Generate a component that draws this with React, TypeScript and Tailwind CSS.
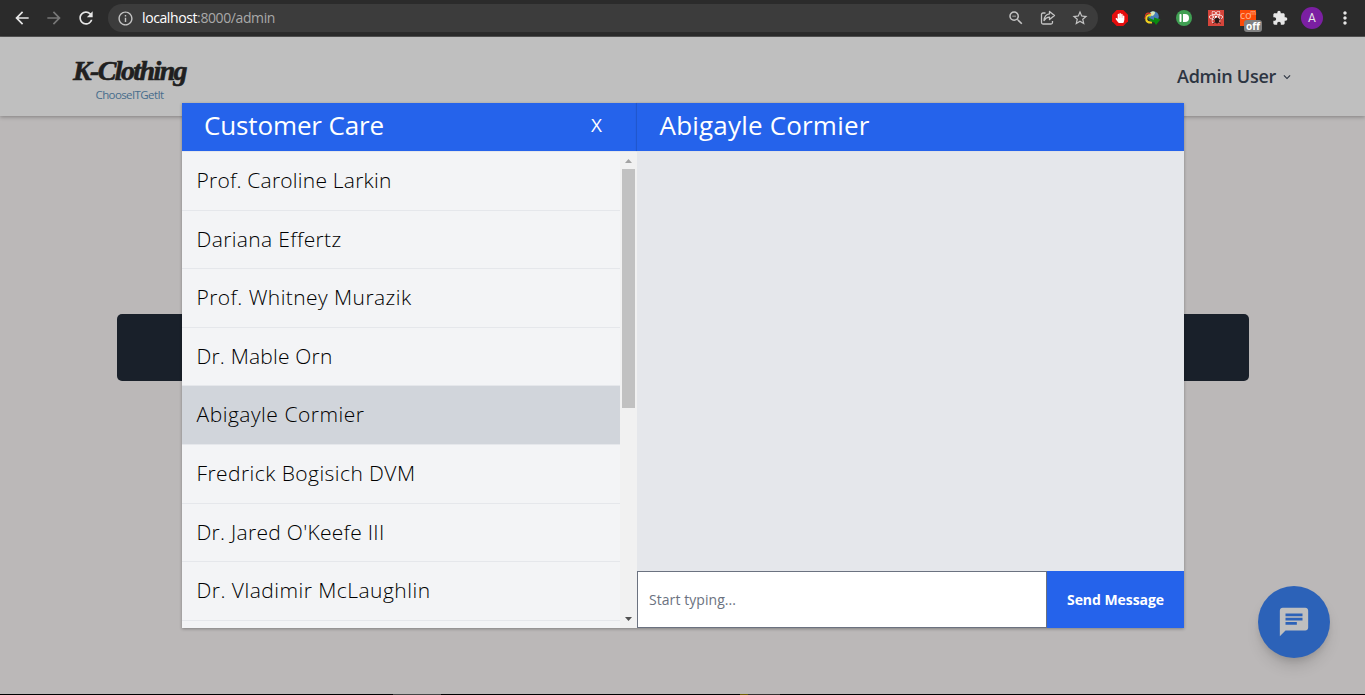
import { useLayoutEffect, useRef } from "react";
import type { ReactNode } from "react";
import { MdArrowBack, MdArrowForward, MdRefresh, MdInfoOutline, MdZoomOut, MdStarBorder, MdExtension, MdMoreVert, MdChat, MdKeyboardArrowDown } from "react-icons/md";
import { FaReact, FaHandPaper } from "react-icons/fa";

type FitProps = { width: number; className?: string; children: ReactNode };

/* Tracks a label so that it spans the given width. */
function Fit({ width, className = "", children }: FitProps) {
  const ref = useRef<HTMLSpanElement>(null);
  useLayoutEffect(() => {
    const el = ref.current;
    if (!el) return;
    el.style.letterSpacing = "0px";
    const count = (el.textContent ?? "").length;
    el.style.letterSpacing = `${(width - el.getBoundingClientRect().width) / count}px`;
  }, [width]);
  return (
    <span ref={ref} className={`inline-block whitespace-nowrap ${className}`}>
      {children}
    </span>
  );
}

const customers = [
  { name: "Prof. Caroline Larkin", width: 195 },
  { name: "Dariana Effertz", width: 145 },
  { name: "Prof. Whitney Murazik", width: 215 },
  { name: "Dr. Mable Orn", width: 136 },
  { name: "Abigayle Cormier", width: 168 },
  { name: "Fredrick Bogisich DVM", width: 219 },
  { name: "Dr. Jared O'Keefe III", width: 188 },
  { name: "Dr. Vladimir McLaughlin", width: 234 },
];

function BrowserBar() {
  return (
    <div className="flex h-[37px] shrink-0 items-center border-b border-[#565656] bg-[#2b2b2b] text-[#e6e6e6]">
      <MdArrowBack className="ml-3 size-5" />
      <MdArrowForward className="ml-3 size-5 text-[#777]" />
      <MdRefresh className="ml-3 size-5" />
      <div className="ml-3 flex h-7 w-[990px] items-center rounded-full bg-[#3c3c3c] pl-[9px] text-[#c4c4c4]">
        <MdInfoOutline className="size-[17px]" />
        <Fit width={133} className="ml-2 font-['Open_Sans',sans-serif] text-[14px] leading-5 text-[#a9a9a9]">
          <span className="text-white">localhost</span>:8000/admin
        </Fit>
        <div className="ml-auto flex items-center gap-[14px] pr-[9px]">
          <MdZoomOut className="size-[18px]" />
          <svg className="size-[18px]" viewBox="0 0 18 18" fill="none" stroke="currentColor" strokeWidth="1.3" strokeLinejoin="round">
            <path d="M6.500 4H4Q2.500 4 2.500 5.500V13.500Q2.500 15 4 15H12Q13.500 15 13.500 13.500V12" />
            <path d="M10.500 2.500L15.500 6.500L10.500 10.500V8.200Q7.500 8 5 11.500Q5.500 5.500 10.500 4.800Z" />
          </svg>
          <MdStarBorder className="size-[18px]" />
        </div>
      </div>
      <div className="ml-3.5 flex items-center gap-4">
        <svg className="size-4" viewBox="0 0 16 16">
          <path d="M4.7 0h6.6L16 4.7v6.6L11.3 16H4.7L0 11.3V4.7z" fill="#e40d0d" />
          <FaHandPaper size={10} x="3" y="3" color="white" />
        </svg>
        <svg className="size-4 overflow-visible" viewBox="0 0 16 16">
          <circle cx="9.500" cy="6.500" r="5.300" fill="#477fb8" />
          <path d="M6 3Q8 0 11 2Q11 5 8 6L6 5z" fill="#d7e7b7" />
          <path d="M7 4Q1 1 1 9" fill="none" stroke="#e33b20" strokeWidth="1.200" />
          <path d="M7 5.500Q2 4 2.300 10Q3 13 8 12.500" fill="none" stroke="#f0d020" strokeWidth="2" />
          <path d="M4 7.500L10 10V7.500L16.500 9.500L12 15L10.500 12.500Q6 12 4 7.500z" fill="#0a8a0f" />
        </svg>
        <svg className="size-4" viewBox="0 0 16 16">
          <circle cx="8" cy="8" r="8" fill="#40a053" />
          <rect x="3.5" y="4" width="2" height="8" rx=".8" fill="white" />
          <path d="M7 4h2a4 4 0 010 8H7z" fill="white" />
        </svg>
        <svg className="size-4" viewBox="0 0 16 16">
          <rect width="16" height="16" fill="#d5453b" />
          <FaReact size={14} x="1" y="0" color="white" />
          <ellipse cx="9" cy="10.500" rx="2.200" ry="3" fill="#291615" />
          <path d="M5 8.500l8 5M13 8.500l-8 5" stroke="#291615" strokeWidth=".8" />
        </svg>
        <div className="relative size-4 bg-[#fc4a08] font-['Lato',sans-serif] text-[11px] leading-[10px] text-[#ffb08a]">
          co<span className="absolute top-[-3px] right-0 text-[7px]">m</span>
          <span className="absolute top-[10px] left-1 flex h-3 w-[18px] items-center justify-center rounded-[3px] bg-[#808080] font-['Open_Sans',sans-serif] text-[10px] leading-3 font-bold text-white">off</span>
        </div>
        <MdExtension className="size-4" />
      </div>
      <div className="ml-[13px] flex size-[22px] items-center justify-center rounded-full bg-[#7b1fa2] font-['Roboto',sans-serif] text-[12px]">A</div>
      <MdMoreVert className="ml-3 size-5" />
    </div>
  );
}

function SiteHeader() {
  return (
    <header className="flex h-[79px] shrink-0 items-center justify-between bg-[#bfbfbf] pr-[71px] pl-[72px] shadow-[0_1px_4px_rgba(0,0,0,0.3)]">
      <div className="flex w-[115px] flex-col items-center pt-1">
        <Fit width={113} className="font-['Liberation_Serif',serif] text-[28px] leading-[30px] font-bold text-[#202020] italic [-webkit-text-stroke:0.6px_#202020]">K-Clothing</Fit>
        <Fit width={68} className="mt-0.5 font-['Open_Sans',sans-serif] text-[11.5px] leading-[14px] text-[#476d8c]">ChooseITGetIt</Fit>
      </div>
      <div className="flex items-center pb-0.5 text-[#2d3542]">
        <Fit width={99} className="font-['Open_Sans',sans-serif] text-[18px] leading-7 font-semibold">Admin User</Fit>
        <MdKeyboardArrowDown className="mt-0.5 ml-1 size-3.5" />
      </div>
    </header>
  );
}

function ChatDialog() {
  return (
    <div className="absolute top-[103px] left-[182px] flex h-[525px] w-[1002px] bg-[#f3f4f6] font-['Open_Sans',sans-serif] shadow-[0_1px_3px_rgba(0,0,0,0.3)]">
      <section className="flex w-[455px] flex-col">
        <div className="flex h-12 shrink-0 items-center bg-[#2563eb] pr-[35px] pb-[5px] pl-[22px] text-white">
          <Fit width={180} className="text-[26px] leading-9">Customer Care</Fit>
          <button className="ml-auto text-[19px] leading-6">X</button>
        </div>
        <div className="flex min-h-0 flex-1 border-t border-[#e5e7eb]">
          <ul className="flex-1 overflow-hidden">
            {customers.map((c) => (
              <li
                key={c.name}
                className={`flex h-[58.6px] items-center border-b border-[#e5e7eb] pl-[14.5px] text-[21px] font-[340] text-black ${c.name === "Abigayle Cormier" ? "bg-[#d1d5db]" : ""}`}
              >
                <Fit width={c.width}>{c.name}</Fit>
              </li>
            ))}
          </ul>
          <div className="flex w-[17px] flex-col items-center bg-[#f1f1f1]">
            <svg className="h-[17px] w-[17px]" viewBox="0 0 17 17"><path d="M5 11h7L8.500 7z" fill="#a3a3a3" /></svg>
            <div className="h-[239px] w-[13px] bg-[#c1c1c1]" />
            <svg className="mt-auto h-[17px] w-[17px]" viewBox="0 0 17 17"><path d="M5 6h7L8.500 10z" fill="#505050" /></svg>
          </div>
        </div>
      </section>
      <section className="flex flex-1 flex-col bg-[#e5e7eb]">
        <div className="flex h-12 items-center bg-[#2563eb] pb-[5px] pl-[22.5px] text-white shadow-[-1px_0_1px_rgba(0,0,0,0.12)]">
          <Fit width={210} className="text-[26px] leading-9">Abigayle Cormier</Fit>
        </div>
        <div className="flex-1" />
        <div className="flex h-[57px]">
          <div className="flex w-[410px] items-center border border-[#6b7280] bg-white pb-px pl-[11px] text-[14px] text-[#6b7280]">
            <Fit width={87}>Start typing...</Fit>
          </div>
          <button className="flex flex-1 items-center justify-center bg-[#2563eb] pb-px text-[14px] font-bold text-white">
            <Fit width={97}>Send Message</Fit>
          </button>
        </div>
      </section>
    </div>
  );
}

export default function App() {
  return (
    <div className="relative flex h-[695px] w-[1365px] flex-col overflow-hidden bg-[#bbb8b8]">
      <BrowserBar />
      <SiteHeader />
      <main className="flex-1 px-[117px] pt-[198px]">
        <div className="h-[67px] w-[1132px] rounded-[5px] bg-[#19202a]" />
      </main>
      <div className="flex h-px bg-black">
        <div className="ml-[393px] h-px w-12 bg-[#454545]" />
        <div className="ml-[299px] h-px w-2 bg-[#6a5b00]" />
        <div className="h-px w-8 bg-[#343030]" />
      </div>
      <ChatDialog />
      <button className="absolute top-[586px] left-[1258px] flex size-[72px] items-center justify-center rounded-full bg-[#2c62b8] text-[#bfbfbf] shadow-[0_10px_15px_-3px_rgba(0,0,0,0.15),0_4px_6px_-2px_rgba(0,0,0,0.1)]">
        <MdChat className="size-[34px]" />
      </button>
    </div>
  );
}
